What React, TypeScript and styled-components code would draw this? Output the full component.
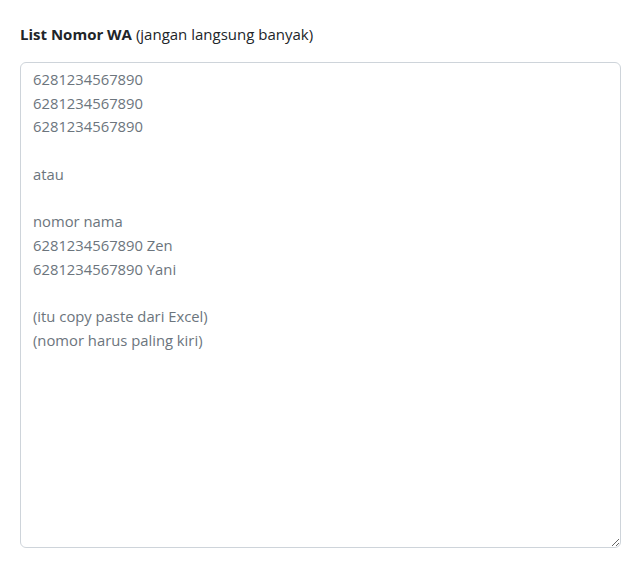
import React from "react";
import styled, { createGlobalStyle } from "styled-components";

const Global = createGlobalStyle`
  html, body { margin: 0; padding: 0; background: #fff; }
  body { font-family: "Open Sans", "Noto Sans", sans-serif; color: #212529; }
`;

const Wrap = styled.div`
  padding: 22px 19px 0 20px;
  display: flex;
  flex-direction: column;
`;

const Label = styled.label`
  font-size: 15px;
  line-height: 24px;
  margin-bottom: 16px;
  color: #212529;
`;

const Strong = styled.b`
  font-weight: 700;
`;

const Area = styled.textarea`
  box-sizing: border-box;
  width: 100%;
  height: 486px;
  padding: 5px 12px;
  font-family: "Open Sans", "Noto Sans", sans-serif;
  font-size: 14.8px;
  line-height: 23.7px;
  color: #212529;
  border: 1px solid #ced4da;
  border-radius: 6px;
  outline: none;
  resize: vertical;
  &::placeholder { color: #6c757d; opacity: 1; }
`;

const placeholder = `6281234567890
6281234567890
6281234567890

atau

nomor nama
6281234567890 Zen
6281234567890 Yani

(itu copy paste dari Excel)
(nomor harus paling kiri)`;

export default function App() {
  return (
    <>
      <Global />
      <Wrap>
        <Label htmlFor="nomor">
          <Strong>List Nomor WA</Strong> (jangan langsung banyak)
        </Label>
        <Area id="nomor" placeholder={placeholder} />
      </Wrap>
    </>
  );
}
